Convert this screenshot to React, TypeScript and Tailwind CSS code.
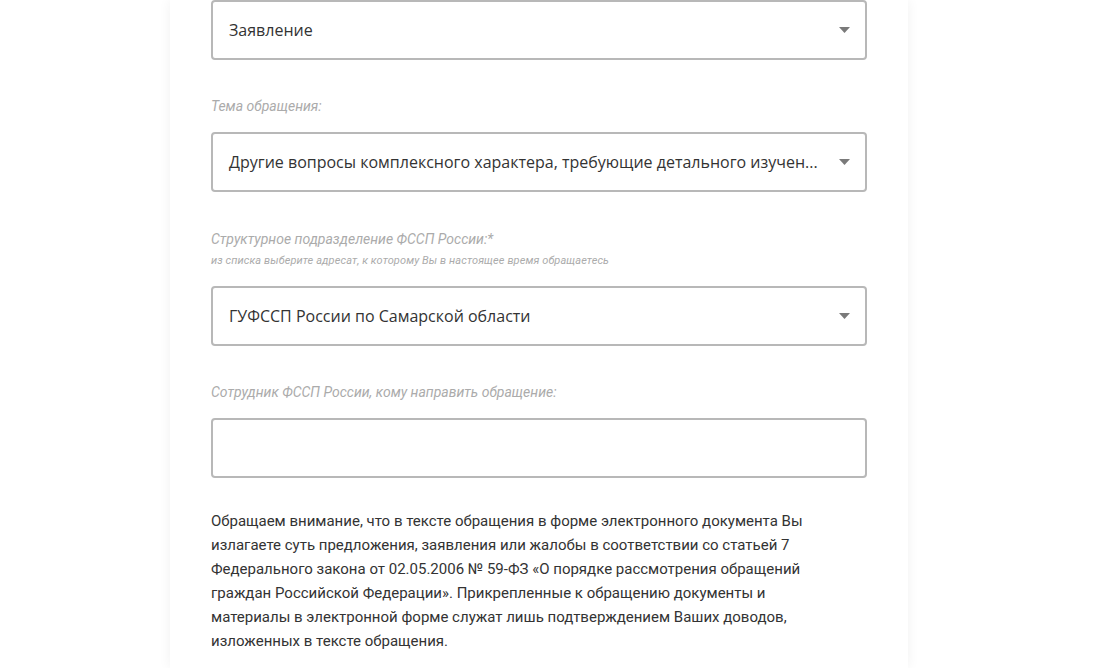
import React from 'react';

const labelCls = "italic text-[14px] leading-[18px] text-[#ababab] font-['Roboto',sans-serif]";

const Caret: React.FC = () => (
  <svg width="11" height="6" viewBox="0 0 11 6" className="shrink-0">
    <path d="M0 0 L11 0 L5.5 6 Z" fill="#7a7a7a" />
  </svg>
);

interface SelectBoxProps {
  value?: string;
  arrow?: boolean;
  className?: string;
}

const SelectBox: React.FC<SelectBoxProps> = ({ value, arrow = true, className }) => (
  <div
    className={`flex items-center h-[60px] border-2 border-[#b8b8b8] rounded-[4px] bg-white pl-[16px] pr-[15px] ${className ?? ''}`}
  >
    <div className="flex-1 min-w-0 whitespace-nowrap text-[16px] text-[#333] font-['Open_Sans',sans-serif] pr-[18px]">
      {value}
    </div>
    {arrow && <Caret />}
  </div>
);

const App: React.FC = () => {
  return (
    <div className="w-full h-[668px] overflow-hidden bg-white">
      <div className="ml-[170px] w-[738px] h-full bg-white shadow-[0_0_12px_rgba(0,0,0,0.06)] px-[41px]">
        <SelectBox value="Заявление" />

        <div className={`${labelCls} mt-[37px]`}>Тема обращения:</div>
        <SelectBox
          className="mt-[17px]"
          value="Другие вопросы комплексного характера, требующие детального изучен..."
        />

        <div className={`${labelCls} mt-[38px]`}>Структурное подразделение ФССП России:*</div>
        <div className="italic text-[11px] leading-[14px] tracking-[0.1px] text-[#ababab] font-['Roboto',sans-serif] mt-[6px]">
          из списка выберите адресат, к которому Вы в настоящее время обращаетесь
        </div>
        <SelectBox className="mt-[18px]" value="ГУФССП России по Самарской области" />

        <div className={`${labelCls} mt-[37px]`}>Сотрудник ФССП России, кому направить обращение:</div>
        <SelectBox className="mt-[17px]" arrow={false} />

        <p className="mt-[31px] text-[15px] leading-[24px] text-[#333] font-['Roboto',sans-serif]">
          Обращаем внимание, что в тексте обращения в форме электронного документа Вы
          <br />
          излагаете суть предложения, заявления или жалобы в соответствии со статьей 7
          <br />
          Федерального закона от 02.05.2006 № 59-ФЗ «О порядке рассмотрения обращений
          <br />
          граждан Российской Федерации». Прикрепленные к обращению документы и
          <br />
          материалы в электронной форме служат лишь подтверждением Ваших доводов,
          <br />
          изложенных в тексте обращения.
        </p>
      </div>
    </div>
  );
};

export default App;
